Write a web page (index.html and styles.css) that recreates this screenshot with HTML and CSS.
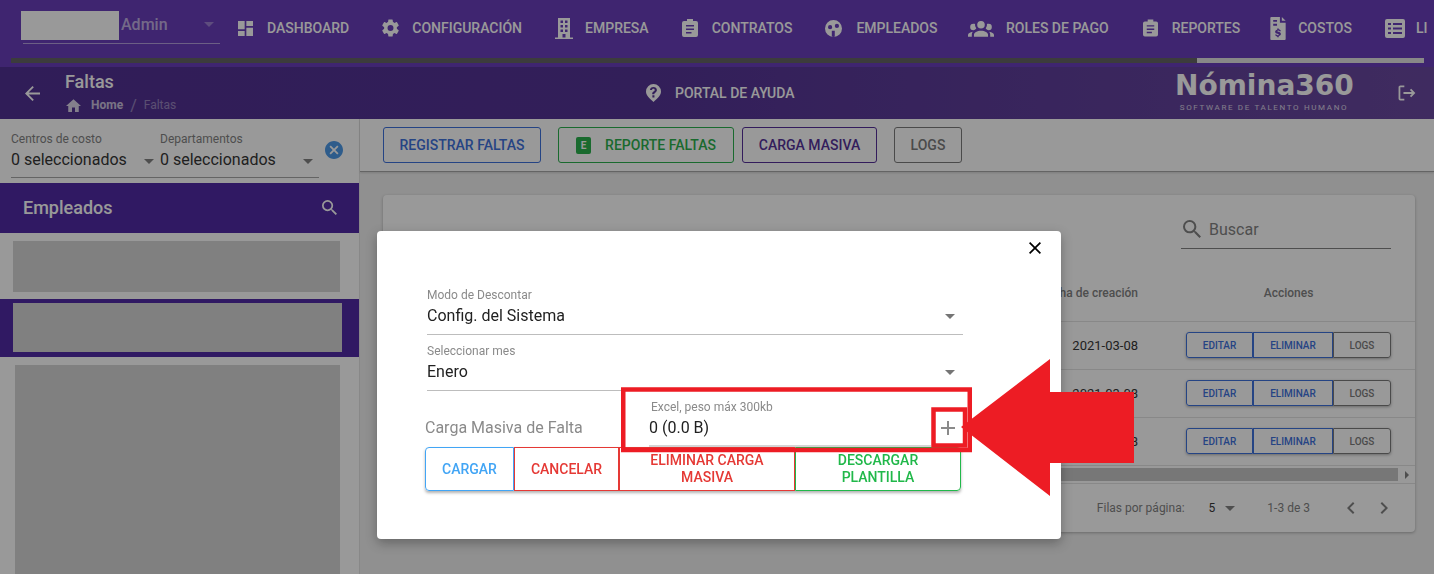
FILE: index.html
```html
<!DOCTYPE html>
<html lang="es">
<head>
<meta charset="utf-8">
<title>Faltas</title>
<link rel="stylesheet" href="styles.css">
</head>
<body>
<svg class="sprite" width="0" height="0" aria-hidden="true">
  <symbol id="i-dash" viewBox="3 3 18 18"><path d="M13 3v6h8V3M13 21h8V11h-8M3 21h8v-6H3M3 13h8V3H3v10z"/></symbol>
  <symbol id="i-cog" viewBox="2 2 20 20"><path d="M12 15.500A3.500 3.500 0 0 1 8.500 12 3.500 3.500 0 0 1 12 8.500a3.500 3.500 0 0 1 3.500 3.500 3.500 3.500 0 0 1-3.500 3.500m7.430-2.530c.04-.32.07-.64.07-.97s-.03-.66-.07-1l2.110-1.630c.19-.15.24-.42.12-.64l-2-3.460c-.12-.22-.39-.31-.61-.22l-2.490 1c-.52-.39-1.060-.73-1.690-.98l-.37-2.650A.506.506 0 0 0 14 2h-4c-.25 0-.46.18-.5.42l-.37 2.650c-.63.25-1.170.59-1.690.98l-2.490-1c-.22-.09-.49 0-.61.22l-2 3.460c-.13.22-.07.49.12.64L4.570 11c-.04.34-.07.67-.07 1s.03.65.07.97l-2.110 1.660c-.19.15-.25.42-.12.64l2 3.460c.12.22.39.3.61.22l2.490-1.010c.52.4 1.060.74 1.690.99l.37 2.650c.04.24.25.42.5.42h4c.25 0 .46-.18.5-.42l.37-2.650c.63-.26 1.170-.59 1.690-.99l2.490 1.010c.22.08.49 0 .61-.22l2-3.460c.12-.22.07-.49-.12-.64l-2.110-1.660z"/></symbol>
  <symbol id="i-building" viewBox="0 0 18 21"><path fill-rule="evenodd" d="M3 0h12v19.500h3V21H0v-1.500h3zM5.500 2.500v2.500h2.500V2.500zm4.500 0v2.500h2.500V2.500zM5.500 7v2.500h2.500V7zM10 7v2.500h2.500V7zM5.500 11.500V14h2.500v-2.500zm4.500 0V14h2.500v-2.500zM7.500 16v3.500h3V16z"/></symbol>
  <symbol id="i-clip" viewBox="0 0 16 18"><path fill-rule="evenodd" d="M5 0h6v2h3a2 2 0 0 1 2 2v12a2 2 0 0 1-2 2H2a2 2 0 0 1-2-2V4a2 2 0 0 1 2-2h3zM4 6v1.500h8V6zm0 3.500V11h8V9.500zM4 13v1.500h5.500V13z"/></symbol>
  <symbol id="i-face" viewBox="2 2 20 20"><path fill-rule="evenodd" d="M12 2a10 10 0 1 0 0 20 10 10 0 0 0 0-20zM5.500 10.500a2.500 2.500 0 1 0 5 0 2.500 2.500 0 1 0-5 0zm8-1.500a2.500 2.500 0 1 0 5 0 2.500 2.500 0 1 0-5 0zM10 14.500h3.500V22H10z"/></symbol>
  <symbol id="i-users" viewBox="0 5 24 15"><path d="M12 5.500A3.500 3.500 0 0 1 15.500 9a3.500 3.500 0 0 1-3.500 3.500A3.500 3.500 0 0 1 8.500 9 3.500 3.500 0 0 1 12 5.500M5 8c.56 0 1.080.15 1.530.42-.15 1.430.27 2.850 1.130 3.960C7.160 13.340 6.160 14 5 14a3 3 0 0 1-3-3 3 3 0 0 1 3-3m14 0a3 3 0 0 1 3 3 3 3 0 0 1-3 3c-1.160 0-2.160-.66-2.660-1.620.86-1.110 1.280-2.530 1.130-3.960.45-.27.97-.42 1.530-.42M5.500 18.250c0-2.070 2.910-3.750 6.500-3.750s6.500 1.680 6.500 3.750V20h-13v-1.750M0 20v-1.500c0-1.390 1.890-2.560 4.450-2.900-.59.68-.95 1.620-.95 2.650V20H0m24 0h-3.500v-1.750c0-1.030-.36-1.970-.95-2.650 2.560.34 4.450 1.510 4.450 2.900V20z"/></symbol>
  <symbol id="i-cost" viewBox="0 0 16 24"><path fill-rule="evenodd" d="M1 0h9v6h6v17a1 1 0 0 1-1 1H1a1 1 0 0 1-1-1V1a1 1 0 0 1 1-1zm11 0 4 4h-4zM3 3v2h4V3zm0 4v2h4V7zm4.200 5v1.200c-1.300.2-2.200 1-2.200 2.100 0 1.300 1.100 1.800 2.500 2.200 1 .3 1.300.5 1.300.9s-.4.7-1.100.7c-.8 0-1.200-.4-1.300-.9H5c.1 1.200 1 1.900 2.200 2.100V21h1.600v-1.200c1.300-.2 2.200-1 2.200-2.100 0-1.400-1.200-1.900-2.500-2.300-1-.3-1.300-.5-1.300-.8s.4-.6 1-.6c.7 0 1 .3 1.100.8H11c-.1-1.100-.9-1.800-2.200-2V12z"/></symbol>
  <symbol id="i-list" viewBox="0 0 20 19"><path fill-rule="evenodd" d="M2 0h16a2 2 0 0 1 2 2v15a2 2 0 0 1-2 2H2a2 2 0 0 1-2-2V2a2 2 0 0 1 2-2zm1 4v2h3V4zm5 0v2h9V4zM3 8.500v2h3v-2zm5 0v2h9v-2zM3 13v2h3v-2zm5 0v2h9v-2z"/></symbol>
  <symbol id="i-back" viewBox="4 4 16 16"><path d="M20 11H7.830l5.590-5.590L12 4l-8 8 8 8 1.410-1.410L7.830 13H20v-2z"/></symbol>
  <symbol id="i-home" viewBox="2 3 20 17"><path d="M10 20v-6h4v6h5v-8h3L12 3 2 12h3v8z"/></symbol>
  <symbol id="i-help" viewBox="0 0 16 19"><path fill-rule="evenodd" d="M8 0a8 8 0 0 1 8 8c0 4-3.500 7.500-8 11C3.500 15.500 0 12 0 8a8 8 0 0 1 8-8zm-.1 3C5.800 3 4.300 4.300 4.200 6.300h2.200c.1-.9.700-1.300 1.500-1.300s1.400.5 1.400 1.200c0 .8-.6 1.200-1.300 1.700-.9.600-1.400 1.300-1.400 2.600v.4h2.200v-.3c0-.7.300-1 1-1.500 1-.7 1.800-1.500 1.800-2.900C11.600 4.200 10 3 7.900 3zM6.800 12v2.200H9V12z"/></symbol>
  <symbol id="i-x" viewBox="5 5 14 14"><path d="M19 6.410 17.590 5 12 10.590 6.410 5 5 6.410 10.590 12 5 17.590 6.410 19 12 13.410 17.590 19 19 17.590 13.410 12z"/></symbol>
  <symbol id="i-xc" viewBox="2 2 20 20"><path d="M12 2C6.470 2 2 6.470 2 12s4.470 10 10 10 10-4.470 10-10S17.530 2 12 2zm5 13.590L15.590 17 12 13.410 8.410 17 7 15.590 10.590 12 7 8.410 8.410 7 12 10.590 15.590 7 17 8.410 13.410 12 17 15.590z"/></symbol>
  <symbol id="i-search" viewBox="3 3 17.500 17.500"><path d="M15.500 14h-.79l-.28-.27A6.471 6.471 0 0 0 16 9.500 6.500 6.500 0 1 0 9.500 16c1.610 0 3.090-.59 4.230-1.570l.27.28v.79l5 4.990L20.490 19l-4.990-5zm-6 0C7.010 14 5 11.990 5 9.500S7.010 5 9.500 5 14 7.010 14 9.500 11.990 14 9.500 14z"/></symbol>
  <symbol id="i-plus" viewBox="5 5 14 14"><path d="M19 13h-6v6h-2v-6H5v-2h6V5h2v6h6v2z"/></symbol>
  <symbol id="i-left" viewBox="0 0 8 12"><path d="M7.410 1.410 6 0 0 6l6 6 1.410-1.410L2.830 6z"/></symbol>
  <symbol id="i-right" viewBox="0 0 8 12"><path d="M.59 10.590 2 12l6-6-6-6L.59 1.410 5.170 6z"/></symbol>
</svg>

<div class="app">
  <nav class="topnav">
    <div class="nav-row">
      <div class="role">
        <span class="role-name"></span>
        <span class="role-label">Admin</span>
        <span class="caret role-caret"></span>
      </div>
      <ul class="menu">
        <li class="menu-item"><svg class="ic ic-dash"><use href="#i-dash"/></svg>Dashboard</li>
        <li class="menu-item"><svg class="ic ic-cog"><use href="#i-cog"/></svg>Configuración</li>
        <li class="menu-item"><svg class="ic ic-bld"><use href="#i-building"/></svg>Empresa</li>
        <li class="menu-item"><svg class="ic ic-clip"><use href="#i-clip"/></svg>Contratos</li>
        <li class="menu-item"><svg class="ic ic-face"><use href="#i-face"/></svg>Empleados</li>
        <li class="menu-item"><svg class="ic ic-users"><use href="#i-users"/></svg>Roles de pago</li>
        <li class="menu-item"><svg class="ic ic-clip ic-clip-r"><use href="#i-clip"/></svg>Reportes</li>
        <li class="menu-item"><svg class="ic ic-cost"><use href="#i-cost"/></svg>Costos</li>
        <li class="menu-item"><svg class="ic ic-list"><use href="#i-list"/></svg>Li</li>
      </ul>
    </div>
    <div class="nav-scroll"><span class="nav-thumb"></span></div>
  </nav>

  <header class="pagebar">
    <svg class="ic ic-back"><use href="#i-back"/></svg>
    <div class="crumbs">
      <div class="crumb-title">Faltas</div>
      <div class="crumb-path">
        <svg class="ic ic-home"><use href="#i-home"/></svg>
        <span class="crumb-home">Home</span>
        <span class="crumb-sep">/</span>
        <span class="crumb-cur">Faltas</span>
      </div>
    </div>
    <div class="help">
      <svg class="ic ic-help"><use href="#i-help"/></svg>
      <span>Portal de ayuda</span>
    </div>
    <div class="logo">
      <div class="logo-name">Nómina360</div>
      <div class="logo-sub">SOFTWARE DE TALENTO HUMANO</div>
    </div>
    <svg class="ic-exit" viewBox="0 0 20 18"><path d="M7 1.500H2.500a1 1 0 0 0-1 1v13a1 1 0 0 0 1 1H7M6 9h12M14 5l4 4-4 4"/></svg>
  </header>

  <div class="content">
    <aside class="side">
      <div class="filters">
        <div class="filter-row">
          <div class="filter">
            <div class="filter-label">Centros de costo</div>
            <div class="filter-value">0 seleccionados<span class="caret"></span></div>
          </div>
          <div class="filter filter-two">
            <div class="filter-label">Departamentos</div>
            <div class="filter-value">0 seleccionados<span class="caret"></span></div>
          </div>
        </div>
        <svg class="ic ic-clear"><use href="#i-xc"/></svg>
      </div>
      <div class="side-head">
        <span>Empleados</span>
        <svg class="ic ic-side-search"><use href="#i-search"/></svg>
      </div>
      <div class="side-item"><span class="blank blank-a"></span></div>
      <div class="side-item side-item-on"><span class="blank blank-b"></span></div>
      <div class="side-rest"><span class="blank blank-c"></span></div>
    </aside>

    <main class="main">
      <div class="toolbar">
        <button class="btn btn-blue">Registrar faltas</button>
        <button class="btn btn-green"><span class="excel">E</span>Reporte faltas</button>
        <button class="btn btn-purple">Carga masiva</button>
        <button class="btn btn-gray">Logs</button>
      </div>
      <section class="card">
        <div class="card-search">
          <div class="search-box">
            <svg class="ic ic-search"><use href="#i-search"/></svg>
            <span>Buscar</span>
          </div>
        </div>
        <div class="row row-head">
          <div class="col-date">Fecha de creación</div>
          <div class="col-act">Acciones</div>
        </div>
        <div class="row">
          <div class="col-date">2021-03-08</div>
          <div class="col-act"><div class="mini"><button class="mini-b mini-e">Editar</button><button class="mini-b mini-d">Eliminar</button><button class="mini-b mini-l">Logs</button></div></div>
        </div>
        <div class="row">
          <div class="col-date">2021-03-08</div>
          <div class="col-act"><div class="mini"><button class="mini-b mini-e">Editar</button><button class="mini-b mini-d">Eliminar</button><button class="mini-b mini-l">Logs</button></div></div>
        </div>
        <div class="row">
          <div class="col-date">2021-03-08</div>
          <div class="col-act"><div class="mini"><button class="mini-b mini-e">Editar</button><button class="mini-b mini-d">Eliminar</button><button class="mini-b mini-l">Logs</button></div></div>
        </div>
        <div class="hscroll"><span class="hscroll-thumb"></span><span class="hscroll-arrow"></span></div>
        <div class="pager">
          <span class="pager-label">Filas por página:</span>
          <span class="pager-size">5</span>
          <span class="caret pager-caret"></span>
          <span class="pager-range">1-3 de 3</span>
          <svg class="ic ic-chev"><use href="#i-left"/></svg>
          <svg class="ic ic-chev ic-chev-r"><use href="#i-right"/></svg>
        </div>
      </section>
    </main>
  </div>
</div>

<div class="overlay"></div>

<div class="modal">
  <div class="modal-head"><svg class="ic ic-close"><use href="#i-x"/></svg></div>
  <div class="field">
    <div class="field-label">Modo de Descontar</div>
    <div class="field-value">Config. del Sistema<span class="caret field-caret"></span></div>
  </div>
  <div class="field">
    <div class="field-label">Seleccionar mes</div>
    <div class="field-value">Enero<span class="caret field-caret"></span></div>
  </div>
  <div class="upload">
    <div class="upload-title">Carga Masiva de Falta</div>
    <div class="upload-file">
      <div class="field-label upload-label">Excel, peso máx 300kb</div>
      <div class="field-value">0 (0.0 B)</div>
    </div>
    <div class="upload-add"><svg class="ic ic-plus"><use href="#i-plus"/></svg></div>
  </div>
  <div class="actions">
    <button class="act act-blue">Cargar</button>
    <button class="act act-red act-cancel">Cancelar</button>
    <button class="act act-red act-del">Eliminar carga masiva</button>
    <button class="act act-green">Descargar plantilla</button>
  </div>
</div>

<svg class="marks" viewBox="0 0 1434 574" aria-hidden="true">
  <polygon points="961,427 1050,359 1050,392 1134,392 1134,463 1050,463 1050,496"/>
  <rect class="mark-box" x="623.250" y="389.500" width="346.500" height="60.500"/>
  <rect class="mark-box" x="933.500" y="409.500" width="31.500" height="36"/>
</svg>
</body>
</html>
```

FILE: styles.css
```css
* { box-sizing: border-box; }
html, body { margin: 0; height: 100%; }
body {
  font-family: Roboto, "Liberation Sans", sans-serif;
  font-size: 14px;
  color: #212121;
  background: #fff;
  overflow: hidden;
}
button { font-family: inherit; cursor: pointer; background: #fff; padding: 0; }
ul { list-style: none; margin: 0; padding: 0; }
.sprite { position: absolute; }
.ic { display: block; flex: none; fill: currentColor; }
.caret {
  display: inline-block;
  width: 0;
  height: 0;
  border-left: 5px solid transparent;
  border-right: 5px solid transparent;
  border-top: 5px solid #757575;
}
.app { height: 574px; display: flex; flex-direction: column; overflow: hidden; }

/* top navigation */
.topnav { height: 67px; flex: none; background: #5929b4; color: #fff; padding: 0 10px 0 11px; }
.nav-row { height: 58px; display: flex; align-items: flex-start; overflow: hidden; margin-right: -10px; }
.role {
  width: 197px;
  height: 44px;
  margin-left: 12px;
  padding-top: 11px;
  display: flex;
  flex: none;
  border-bottom: 1px solid rgba(255, 255, 255, .5);
}
.role-name { width: 98px; height: 29px; margin-left: -2px; background: #fff; }
.role-label { margin: 3px 0 0 2px; font-size: 16px; font-weight: 500; line-height: 22px; color: rgba(255, 255, 255, .6); }
.role-caret { margin: 11px 0 0 36px; border-top-color: rgba(255, 255, 255, .35); }
.menu { display: flex; gap: 33px; margin: 17px 0 0 18px; white-space: nowrap; }
.menu-item {
  display: flex;
  align-items: center;
  gap: 14px;
  height: 22px;
  font-size: 14px;
  font-weight: 500;
  text-transform: uppercase;
}
.ic-dash { width: 15px; height: 15px; }
.ic-cog { width: 17px; height: 18px; margin-right: -1px; }
.ic-bld { width: 18px; height: 21px; margin-right: -2px; }
.ic-clip { width: 16px; height: 18px; }
.ic-clip-r { margin-left: 1px; width: 15px; }
.ic-face { width: 17px; height: 17px; }
.ic-users { width: 26px; height: 17px; margin: 0 -2.500px 0 -2px; }
.ic-cost { width: 16px; height: 23px; margin: 0 -2px 0 -3px; }
.ic-list { width: 20px; height: 19px; margin-right: -3px; }
.nav-scroll { height: 5px; background: #535353; }
.nav-thumb { display: block; width: 227px; height: 5px; margin-left: auto; background: #e0e0e0; }

/* page bar */
.pagebar {
  height: 52px;
  flex: none;
  display: flex;
  align-items: center;
  background: linear-gradient(90deg, #3e1a87 0%, #421e8a 45%, #5a3596 100%);
  color: #fff;
  padding: 0 18px 0 25px;
}
.ic-back { width: 15px; height: 15px; margin-right: 25px; }
.crumbs { width: 581px; flex: none; padding-top: 4px; }
.crumb-title { font-size: 18px; font-weight: 500; line-height: 24px; margin-top: -7px; }
.crumb-path { display: flex; align-items: center; height: 16px; margin-top: 3px; font-size: 12px; }
.ic-home { width: 15px; height: 13px; margin-left: 1px; opacity: .8; }
.crumb-home { font-weight: 700; margin-left: 10px; opacity: .7; }
.crumb-sep { margin-left: 7px; font-size: 16px; opacity: .4; }
.crumb-cur { margin-left: 7px; opacity: .4; }
.help { display: flex; align-items: center; gap: 14px; font-size: 14px; font-weight: 500; text-transform: uppercase; }
.ic-help { width: 15px; height: 18px; }
.logo { margin-left: auto; width: 178px; text-align: center; margin-top: -1px; }
.logo-name { font-family: "DejaVu Sans", sans-serif; font-size: 28px; font-weight: 700; line-height: 28px; white-space: nowrap; }
.logo-sub { font-size: 8px; line-height: 10px; letter-spacing: 1.650px; white-space: nowrap; margin-top: 3px; opacity: .75; }
.ic-exit { width: 18px; height: 16px; margin: -1px 0 0 45px; fill: none; stroke: #fff; stroke-width: 2; }

/* layout */
.content { flex: 1; display: flex; min-height: 0; }
.side { width: 360px; flex: none; border-right: 1px solid #e0e0e0; background: #fff; }
.filters { position: relative; height: 64px; padding: 12px 0 0 11px; }
.filter-row { display: flex; width: 308px; height: 47px; border-bottom: 1px solid #9e9e9e; }
.filter { width: 149px; }
.filter-two { width: 159px; }
.filter-label { font-size: 12px; line-height: 16px; color: #757575; }
.filter-value { display: flex; align-items: center; justify-content: space-between; font-size: 16px; line-height: 24px; padding-right: 6px; margin-top: 1px; }
.filter-value .caret { margin-top: 3px; }
.ic-clear { position: absolute; left: 325px; top: 22px; width: 18px; height: 18px; color: #3a8fe6; }
.side-head {
  height: 50px;
  display: flex;
  align-items: center;
  justify-content: space-between;
  padding: 0 22px 2px 23px;
  background: #3d149b;
  color: #fff;
  font-size: 18px;
  font-weight: 500;
}
.ic-side-search { width: 15px; height: 15px; }
.side-item { height: 66px; padding: 8px 19px 0 13px; }
.side-item-on { height: 58px; padding: 4px 17px 0 13px; background: #3d149b; }
.side-rest { padding: 8px 19px 0 15px; }
.blank { display: block; background: #d1d1d1; }
.blank-a { height: 51px; }
.blank-b { height: 49px; }
.blank-c { height: 260px; }

/* main */
.main { flex: 1; min-width: 0; background: #eee; }
.toolbar {
  height: 53px;
  display: flex;
  align-items: flex-start;
  padding: 8px 0 0 23px;
  background: #fff;
  border-bottom: 1px solid #9e9e9e;
  box-shadow: 0 1px 2px rgba(0, 0, 0, .15);
}
.btn {
  height: 36px;
  display: flex;
  align-items: center;
  justify-content: center;
  border: 1px solid;
  border-radius: 3px;
  font-size: 14px;
  font-weight: 500;
  text-transform: uppercase;
}
.btn-blue { width: 158px; color: #2a62d8; border-color: #2a62d8; }
.btn-green { width: 176px; margin-left: 17px; color: #14a83a; border-color: #14a83a; gap: 14px; }
.btn-purple { width: 135px; margin-left: 8px; color: #44198f; border-color: #44198f; }
.btn-gray { width: 68px; margin-left: 17px; color: #6e6e6e; border-color: #6e6e6e; }
.excel {
  width: 15px;
  height: 17px;
  border-radius: 2px;
  background: #14a83a;
  color: #fff;
  font-size: 10px;
  font-weight: 700;
  line-height: 17px;
  text-align: center;
}
.card {
  margin: 23px 19px 0 23px;
  height: 337px;
  background: #fff;
  border-radius: 4px;
  box-shadow: 0 1px 3px rgba(0, 0, 0, .3);
}
.card-search { height: 70px; padding: 21px 24px 0 0; display: flex; justify-content: flex-end; }
.search-box {
  width: 210px;
  height: 33px;
  display: flex;
  align-items: center;
  gap: 8px;
  padding: 0 0 6px 2px;
  border-bottom: 1px solid #757575;
  font-size: 16px;
  color: #757575;
}
.ic-search { width: 18px; height: 18px; }
.row {
  height: 48px;
  display: flex;
  align-items: center;
  justify-content: flex-end;
  border-bottom: 1px solid #e0e0e0;
  font-size: 13px;
}
.row-head { height: 57px; font-size: 12px; font-weight: 500; color: #757575; }
.col-date { text-align: right; white-space: nowrap; }
.col-act { width: 229px; margin-left: 48px; padding-right: 24px; text-align: center; }
.mini { display: flex; margin-top: -1px; border-radius: 3px; box-shadow: 0 1px 3px rgba(0, 0, 0, .35); }
.mini-b {
  height: 26px;
  border: 1px solid;
  font-size: 10px;
  font-weight: 500;
  text-transform: uppercase;
  color: #2a62d8;
}
.mini-e { width: 67px; border-radius: 3px 0 0 3px; }
.mini-d { width: 80px; }
.mini-l { width: 58px; border-radius: 0 3px 3px 0; color: #6e6e6e; }
.hscroll { height: 18px; display: flex; align-items: center; justify-content: space-between; border-bottom: 1px solid #e0e0e0; padding-right: 6px; }
.hscroll-thumb { flex: 1; height: 13px; background: #c1c1c1; margin-right: 7px; }
.hscroll-arrow { width: 0; height: 0; border-top: 4px solid transparent; border-bottom: 4px solid transparent; border-left: 4px solid #757575; }
.pager { height: 48px; display: flex; align-items: center; justify-content: flex-end; font-size: 12px; color: #757575; padding-right: 27px; }
.pager-size { margin-left: 24px; color: #212121; }
.pager-caret { margin-left: 10px; }
.pager-range { margin: 0 37px 0 32px; }
.ic-chev { width: 8px; height: 12px; }
.ic-chev-r { margin-left: 25px; }

/* dialog */
.overlay { position: fixed; inset: 0; background: rgba(33, 33, 33, .46); z-index: 10; }
.modal {
  position: fixed;
  left: 377px;
  top: 231px;
  width: 684px;
  height: 308px;
  z-index: 11;
  padding: 0 98px 0 50px;
  background: #fff;
  border-radius: 4px;
  box-shadow: 0 4px 12px rgba(0, 0, 0, .3);
}
.modal-head { height: 57px; margin-right: -78px; padding-top: 10px; display: flex; justify-content: flex-end; }
.ic-close { width: 12px; height: 12px; margin-top: 1px; color: #000; }
.field { height: 47px; margin-bottom: 9px; border-bottom: 1px solid #bdbdbd; }
.field + .field { margin-bottom: 0; }
.field-label { font-size: 12px; line-height: 14px; color: #8a8a8a; }
.field-value { display: flex; align-items: center; justify-content: space-between; margin-top: 3px; font-size: 16px; line-height: 22px; color: #212121; }
.field-caret { margin-right: 8px; }
.upload { display: flex; height: 56px; margin: 0 -2px; }
.upload-title { flex: none; width: 224px; padding-top: 27px; font-size: 16px; line-height: 20px; color: #8a8a8a; }
.upload-file { flex: none; width: 282px; height: 56px; padding-top: 9px; border-bottom: 2px solid #d5d5d5; }
.upload-label { padding-left: 2px; }
.upload-add { flex: none; width: 34px; display: flex; justify-content: center; padding-top: 30px; color: #8a8a8a; }
.ic-plus { width: 14px; height: 14px; }
.actions { display: flex; width: 536px; margin-left: -2px; height: 44px; border-radius: 4px; box-shadow: 0 2px 3px rgba(0, 0, 0, .3); }
.act {
  height: 44px;
  border: 1px solid;
  font-size: 14px;
  font-weight: 500;
  line-height: 17px;
  text-transform: uppercase;
}
.act-blue { width: 89px; color: #42a5f5; border-color: #42a5f5; border-radius: 4px 0 0 4px; }
.act-red { color: #e53935; border-color: #e53935; }
.act-cancel { width: 105px; }
.act-del { width: 176px; padding: 0 20px; }
.act-green { width: 166px; padding: 0 30px; color: #21b84a; border-color: #21b84a; border-radius: 0 4px 4px 0; }

/* red annotation marks */
.marks { position: fixed; left: 0; top: 0; width: 1434px; height: 574px; z-index: 12; fill: #ed1c24; pointer-events: none; }
.mark-box { fill: none; stroke: #ed1c24; stroke-width: 4.500; }
```
